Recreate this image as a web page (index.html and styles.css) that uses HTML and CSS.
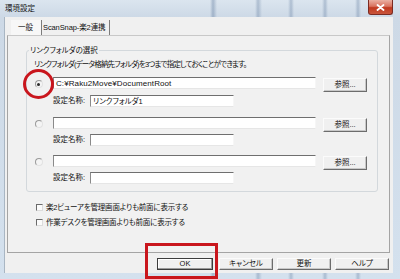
FILE: index.html
```html
<!DOCTYPE html>
<html lang="ja">
<head>
<meta charset="utf-8">
<title>環境設定</title>
<link rel="stylesheet" href="styles.css">
</head>
<body>
<div class="window">
  <div class="titlebar">
    <span class="title">環境設定</span>
    <span class="close"><svg width="9" height="7" viewBox="0 0 9 7"><path d="M1.5 1 L7.5 6 M7.5 1 L1.5 6" stroke="#fff" stroke-width="1.8" stroke-linecap="round"/></svg></span>
  </div>
  <div class="client">
    <div class="tabs">
      <div class="tab sel">一般</div>
      <div class="tab">ScanSnap-楽2連携</div>
    </div>
    <div class="panel">
      <fieldset class="group">
        <legend>リンクフォルダの選択</legend>
        <div class="desc">リンクフォルダ(データ格納先フォルダ)を3つまで指定しておくことができます。</div>
        <div class="row first">
          <span class="radio on"></span>
          <div class="field path">C:¥Raku2Move¥DocumentRoot</div>
          <div class="btn browse">参照...</div>
        </div>
        <div class="name-row">
          <span class="lbl">設定名称:</span>
          <div class="field name">リンクフォルダ1</div>
        </div>
        <div class="row second">
          <span class="radio"></span>
          <div class="field path"></div>
          <div class="btn browse">参照...</div>
        </div>
        <div class="name-row tight">
          <span class="lbl">設定名称:</span>
          <div class="field name"></div>
        </div>
        <div class="row third">
          <span class="radio"></span>
          <div class="field path"></div>
          <div class="btn browse">参照...</div>
        </div>
        <div class="name-row tight">
          <span class="lbl">設定名称:</span>
          <div class="field name"></div>
        </div>
      </fieldset>
      <div class="checks">
        <div class="check"><span class="box"></span>楽2ビューアを管理画面よりも前面に表示する</div>
        <div class="check"><span class="box"></span>作業デスクを管理画面よりも前面に表示する</div>
      </div>
    </div>
    <div class="buttons">
      <div class="btn dlg default">OK</div>
      <div class="btn dlg">キャンセル</div>
      <div class="btn dlg">更新</div>
      <div class="btn dlg">ヘルプ</div>
    </div>
  </div>
  <div class="mark-circle"></div>
  <div class="mark-rect"></div>
</div>
</body>
</html>
```
FILE: styles.css
```css
* { box-sizing: border-box; }
html, body { margin: 0; padding: 0; }
body {
  width: 400px;
  height: 279px;
  overflow: hidden;
  font-family: "Liberation Sans", "Noto Sans CJK JP", sans-serif;
  font-size: 7.5px;
  color: #111;
  font-feature-settings: "palt";
  background: #fff;
}
.window {
  position: relative;
  width: 400px;
  height: 279px;
  display: flex;
  flex-direction: column;
  background:
    linear-gradient(90deg, transparent 210px, rgba(70,100,140,.35) 213px, transparent 217px,
      transparent 255px, rgba(70,100,140,.3) 258px, transparent 262px,
      transparent 288px, rgba(70,100,140,.3) 291px, transparent 294px,
      transparent 322px, rgba(70,100,140,.3) 325px, transparent 328px,
      transparent 355px, rgba(70,100,140,.3) 358px, transparent 361px),
    linear-gradient(180deg, #dbe5ef 0, #cdd9e6 17px, #d4e1ee 100%);
}
.titlebar {
  height: 17px;
  display: flex;
  justify-content: space-between;
  align-items: flex-start;
  padding-left: 5px;
}
.title {
  line-height: 17px;
  font-size: 7.5px;
  color: #151515;
}
.close {
  width: 25px;
  height: 15px;
  margin-right: 7px;
  border: 1px solid #7b2b22;
  border-top: none;
  border-radius: 0 0 3px 3px;
  background: linear-gradient(180deg, #eab0a2 0, #d9735f 45%, #c0391f 55%, #c9553c 100%);
  display: flex;
  align-items: center;
  justify-content: center;
}
.client {
  flex: 1;
  margin: 0 7px 6px 4px;
  background: #f0f0f0;
  display: flex;
  flex-direction: column;
  padding: 3px 3px 3px 2px;
  border-left: 1px solid #a9b6c3;
}
.tabs {
  height: 15px;
  display: flex;
  padding-left: 4px;
}
.tab {
  padding: 0 7px;
  line-height: 15px;
  border-right: 1px solid #7c7c7c;
  white-space: nowrap;
}
.tab.sel {
  background: #f7f7f7;
  padding: 0 8px 0 7px;
}
.tab + .tab { padding: 0 4px 0 1px; letter-spacing: -0.1px; }
.panel {
  flex: 1;
  border: 1px solid #a4a4a4;
  border-top-color: #c8c8c8;
  background: #f1f1f1;
  display: flex;
  flex-direction: column;
}
.group {
  margin: 10px 11px 0 18px;
  padding: 5px 10px 7px 7px;
  border: 1px solid #d3d8dc;
  border-radius: 3px;
  min-width: 0;
}
.group legend {
  padding: 0 1px;
  margin-left: -5px;
  line-height: 9px;
}
.desc { line-height: 9px; white-space: nowrap; letter-spacing: -0.8px; }
.row {
  display: flex;
  align-items: flex-start;
  height: 15px;
}
.row.first { margin-top: 8px; }
.row.second { margin-top: 10px; }
.row.third { margin-top: 9px; }
.radio {
  width: 8px;
  height: 8px;
  margin: 3px 10px 0 1px;
  border-radius: 50%;
  border: 1px solid #9a9a9a;
  border-right-color: #e2e2e2;
  border-bottom-color: #e2e2e2;
  background: #f4f4f4;
  display: flex;
  align-items: center;
  justify-content: center;
}
.radio.on::after {
  content: "";
  width: 3px;
  height: 3px;
  border-radius: 50%;
  background: #2a2a2a;
}
.field {
  height: 12px;
  background: #fff;
  border-top: 1px solid #6f6f6f;
  border-left: 1px solid #8a8a8a;
  border-right: 1px solid #f6f6f6;
  border-bottom: 1px solid #e6e6e6;
  line-height: 11px;
  padding-left: 2px;
  white-space: nowrap;
}
.field.path { width: 264px; font-size: 8px; letter-spacing: 0.1px; }
.field.name { width: 144px; }
.btn {
  background: #f0f0f0;
  border-top: 1px solid #fbfbfb;
  border-left: 1px solid #fbfbfb;
  border-right: 1px solid #6c6c6c;
  border-bottom: 1px solid #6c6c6c;
  box-shadow: inset -1px -1px 0 #c8c8c8;
  text-align: center;
}
.btn.browse {
  width: 44px;
  height: 14px;
  margin: 1px 0 0 7px;
  line-height: 12px;
}
.name-row {
  display: flex;
  align-items: center;
  margin-top: 3px;
  padding-left: 19px;
}
.name-row.tight { margin-top: 2px; }
.lbl { width: 37px; line-height: 12px; }
.checks {
  margin: 8px 0 0 28px;
}
.check {
  display: flex;
  align-items: center;
  line-height: 15px;
  white-space: nowrap;
  letter-spacing: -0.2px;
}
.box {
  width: 7px;
  height: 7px;
  margin-right: 3px;
  background: #fbfbfb;
  border-top: 1px solid #6a6a6a;
  border-left: 1px solid #6a6a6a;
  border-right: 1px solid #dcdcdc;
  border-bottom: 1px solid #dcdcdc;
}
.buttons {
  display: flex;
  justify-content: flex-end;
  gap: 4px;
  margin-top: 5px;
  padding-right: 1px;
}
.btn.dlg {
  width: 54px;
  height: 12px;
  line-height: 10px;
}
.btn.default {
  border: 1px solid #3c3c3c;
  box-shadow: inset -1px -1px 0 #9a9a9a, inset 1px 1px 0 #fff;
  margin-right: 2px;
  width: 56px;
}
.mark-circle {
  position: absolute;
  left: 23px;
  top: 69px;
  width: 31px;
  height: 30px;
  border: 3px solid #c9161d;
  border-radius: 50%;
}
.mark-rect {
  position: absolute;
  left: 145px;
  top: 243px;
  width: 73px;
  height: 36px;
  border: 3px solid #c9161d;
}
```
